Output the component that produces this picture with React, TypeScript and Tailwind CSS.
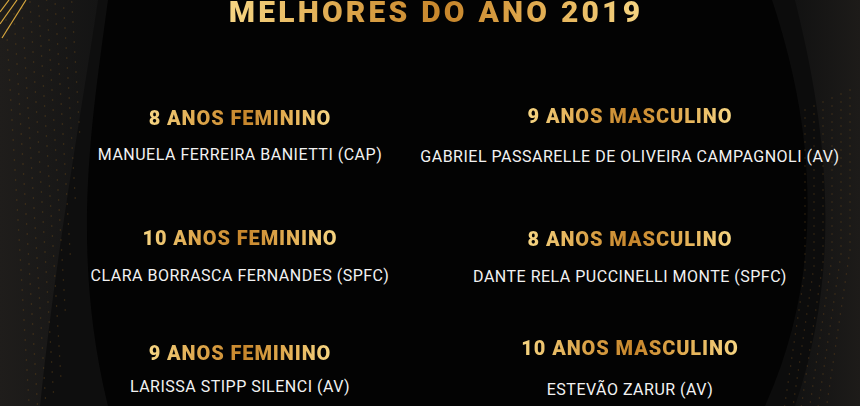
import React from "react";

/* ── Data ── */

type Winner = {
  category: string;
  name: string;
  top: string; // margin above heading
  gap: string; // space between heading and name
};

const LEFT: Winner[] = [
  { category: "8 ANOS FEMININO", name: "MANUELA FERREIRA BANIETTI (CAP)", top: "mt-[81px]", gap: "mt-[17px]" },
  { category: "10 ANOS FEMININO", name: "CLARA BORRASCA FERNANDES (SPFC)", top: "mt-[63px]", gap: "mt-[18px]" },
  { category: "9 ANOS FEMININO", name: "LARISSA STIPP SILENCI (AV)", top: "mt-[57px]", gap: "mt-[14px]" },
];

const RIGHT: Winner[] = [
  { category: "9 ANOS MASCULINO", name: "GABRIEL PASSARELLE DE OLIVEIRA CAMPAGNOLI (AV)", top: "mt-[79px]", gap: "mt-[21px]" },
  { category: "8 ANOS MASCULINO", name: "DANTE RELA PUCCINELLI MONTE (SPFC)", top: "mt-[62px]", gap: "mt-[18px]" },
  { category: "10 ANOS MASCULINO", name: "ESTEVÃO ZARUR (AV)", top: "mt-[51px]", gap: "mt-[22px]" },
];

const GOLD =
  "bg-[linear-gradient(90deg,#f6d583_0%,#dba348_30%,#c6852b_52%,#e2ad52_75%,#f6d583_100%)] bg-clip-text text-transparent";

/* ── Background drawing ── */

function Backdrop() {
  const dotsLeft: React.ReactNode[] = [];
  for (let row = 0; row < 40; row++) {
    for (let col = 0; col < 9; col++) {
      const x = 6 + col * 8 + row * 0.6;
      const y = 20 + row * 10 - col * 6;
      if (x > 95 - row * 0.9 || y < 0) continue;
      dotsLeft.push(<circle key={`l${row}-${col}`} cx={x} cy={y} r={0.8} fill="#6b4a1c" opacity={0.55} />);
    }
  }
  const dotsRight: React.ReactNode[] = [];
  for (let row = 0; row < 40; row++) {
    for (let col = 0; col < 6; col++) {
      const x = 850 - col * 9 - Math.max(0, row - 20) * 1.2;
      const y = 90 + row * 8 + col * 4;
      dotsRight.push(<circle key={`r${row}-${col}`} cx={x} cy={y} r={0.8} fill="#6b4a1c" opacity={0.5} />);
    }
  }
  return (
    <svg className="absolute inset-0" width="860" height="406" viewBox="0 0 860 406">
      <defs>
        <linearGradient id="lg" x1="0" y1="0" x2="1" y2="0">
          <stop offset="0" stopColor="#1f1d1b" />
          <stop offset="1" stopColor="#141414" />
        </linearGradient>
        <linearGradient id="rg" x1="1" y1="0" x2="0" y2="0">
          <stop offset="0" stopColor="#1d1b19" />
          <stop offset="1" stopColor="#121212" />
        </linearGradient>
      </defs>
      <rect width="860" height="406" fill="#030303" />
      {/* left band */}
      <path d="M0 0 H108 C92 120 70 250 108 406 H0 Z" fill="#0e0e0e" />
      <path d="M0 0 H98 C80 120 55 260 40 406 H0 Z" fill="url(#lg)" />
      {/* right band */}
      <path d="M860 0 H772 C805 100 835 250 765 406 H860 Z" fill="#0c0c0c" />
      <path d="M860 0 H795 C825 120 845 260 795 406 H860 Z" fill="url(#rg)" />
      {dotsLeft}
      {dotsRight}
      {/* gold strokes top-left */}
      <g stroke="#d7a73e" strokeWidth="1.2">
        <line x1="0" y1="12" x2="9" y2="0" />
        <line x1="0" y1="24" x2="17" y2="0" />
        <line x1="2" y1="38" x2="26" y2="0" />
      </g>
    </svg>
  );
}

/* ── Column ── */

function Column({ items }: { items: Winner[] }) {
  return (
    <div className="flex flex-col items-center">
      {items.map((w) => (
        <div key={w.category} className={`flex flex-col items-center ${w.top}`}>
          <div className={`text-[20px] leading-[20px] font-black tracking-[0.9px] ${GOLD}`}>{w.category}</div>
          <div className={`text-[16px] leading-[20px] tracking-[0.5px] text-[#f2f2f2] whitespace-nowrap ${w.gap}`}>
            {w.name}
          </div>
        </div>
      ))}
    </div>
  );
}

export default function App() {
  return (
    <div
      className="relative w-[860px] h-[406px] overflow-hidden bg-black"
      style={{ fontFamily: "Roboto, 'Liberation Sans', sans-serif" }}
    >
      <Backdrop />
      <div className="relative flex flex-col">
        <div className="-mt-[3px] flex justify-center pl-[12px]">
          <h1 className={`text-[30px] leading-[30px] font-black tracking-[3.2px] ${GOLD}`}>MELHORES DO ANO 2019</h1>
        </div>
        <div className="grid grid-cols-[390px_390px] pl-[45px]">
          <Column items={LEFT} />
          <Column items={RIGHT} />
        </div>
      </div>
    </div>
  );
}
